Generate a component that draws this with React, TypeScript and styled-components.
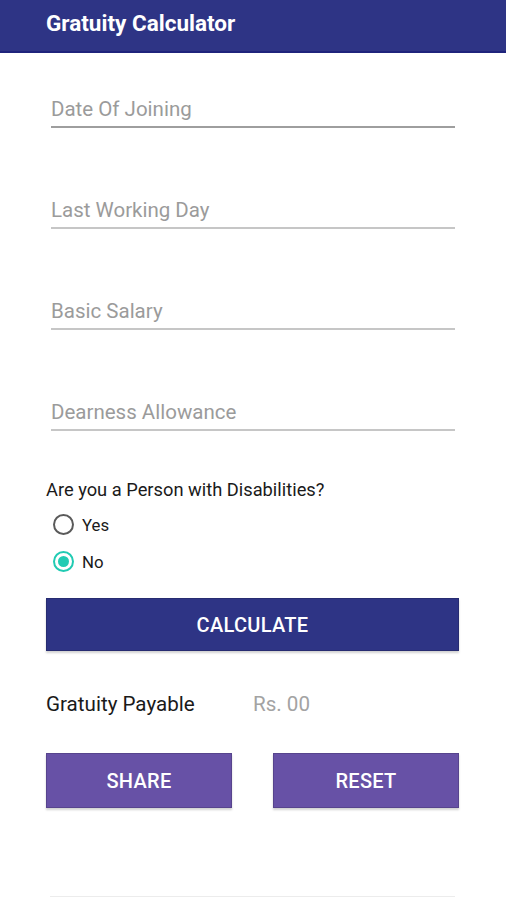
import React, { useState } from 'react';
import styled, { createGlobalStyle } from 'styled-components';

const GlobalStyle = createGlobalStyle`
  html, body {
    margin: 0;
    padding: 0;
    background: #ffffff;
    font-family: Roboto, "Noto Sans", "Liberation Sans", sans-serif;
  }
`;

const Page = styled.div`
  width: 506px;
  height: 900px;
  background: #ffffff;
  overflow: hidden;
  display: flex;
  flex-direction: column;
`;

const Toolbar = styled.header`
  height: 45px;
  background: #2e3485;
  border-bottom: 2px solid #1f247c;
  display: flex;
  align-items: center;
  padding-left: 46px;
  padding-bottom: 6px;
  box-sizing: content-box;
`;

const Title = styled.h1`
  margin: 0;
  color: #ffffff;
  font-size: 22.5px;
  font-weight: 700;
`;

const Content = styled.main`
  padding: 0 47px 0 46px;
  display: flex;
  flex-direction: column;
`;

const Fields = styled.div`
  display: flex;
  flex-direction: column;
  gap: 65px;
  padding: 39px 4px 0 5px;
`;

const Field = styled.label`
  display: flex;
  flex-direction: column;
`;

const FieldInput = styled.input<{ $active?: boolean }>`
  border: none;
  border-bottom: 2px solid ${(p) => (p.$active ? '#9e9e9e' : '#c6c6c6')};
  outline: none;
  padding: 0;
  height: 34px;
  font-family: inherit;
  font-size: 20.5px;
  color: #333;
  background: transparent;
  &::placeholder {
    color: #9b9b9b;
  }
`;

const Question = styled.p`
  margin: 48px 0 0;
  font-size: 18.3px;
  line-height: 22px;
  color: #1a1a1a;
`;

const RadioGroup = styled.div`
  display: flex;
  flex-direction: column;
  padding: 5px 0 0 7px;
`;

const RadioRow = styled.label`
  display: flex;
  align-items: center;
  gap: 8px;
  height: 37px;
  font-size: 16.8px;
  color: #1a1a1a;
  cursor: pointer;
`;

const RadioCircle = styled.span<{ $checked: boolean }>`
  width: 17px;
  height: 17px;
  border-radius: 50%;
  border: 2.5px solid ${(p) => (p.$checked ? '#21cbb3' : '#5a5a5a')};
  display: flex;
  align-items: center;
  justify-content: center;
  &::after {
    content: '';
    width: 11px;
    height: 11px;
    border-radius: 50%;
    background: ${(p) => (p.$checked ? '#21cbb3' : 'transparent')};
  }
`;

const Button = styled.button<{ $color: string }>`
  border: 1px solid rgba(0, 0, 0, 0.15);
  background: ${(p) => p.$color};
  color: #ffffff;
  font-family: inherit;
  font-size: 20px;
  font-weight: 500;
  letter-spacing: 0.3px;
  box-shadow: 0 2px 2px rgba(0, 0, 0, 0.18);
  cursor: pointer;
`;

const CalculateButton = styled(Button)`
  margin-top: 18px;
  height: 53px;
`;

const ResultRow = styled.div`
  display: flex;
  align-items: center;
  height: 30px;
  margin-top: 38px;
  font-size: 20.6px;
`;

const ResultLabel = styled.span`
  width: 207px;
  color: #1a1a1a;
`;

const ResultValue = styled.span`
  color: #a3a3a3;
`;

const ButtonRow = styled.div`
  display: grid;
  grid-template-columns: 186px 186px;
  justify-content: space-between;
  margin-top: 34px;
`;

const ActionButton = styled(Button)`
  height: 55px;
`;

const BottomRule = styled.div`
  margin: 88px 4px 0;
  height: 1px;
  background: #ececec;
`;

const fields = ['Date Of Joining', 'Last Working Day', 'Basic Salary', 'Dearness Allowance'];

const App: React.FC = () => {
  const [disabled, setDisabled] = useState<'yes' | 'no'>('no');

  return (
    <Page>
      <GlobalStyle />
      <Toolbar>
        <Title>Gratuity Calculator</Title>
      </Toolbar>
      <Content>
        <Fields>
          {fields.map((f, i) => (
            <Field key={f}>
              <FieldInput placeholder={f} $active={i === 0} />
            </Field>
          ))}
        </Fields>

        <Question>Are you a Person with Disabilities?</Question>
        <RadioGroup>
          <RadioRow onClick={() => setDisabled('yes')}>
            <RadioCircle $checked={disabled === 'yes'} />
            Yes
          </RadioRow>
          <RadioRow onClick={() => setDisabled('no')}>
            <RadioCircle $checked={disabled === 'no'} />
            No
          </RadioRow>
        </RadioGroup>

        <CalculateButton $color="#2e3485">CALCULATE</CalculateButton>

        <ResultRow>
          <ResultLabel>Gratuity Payable</ResultLabel>
          <ResultValue>Rs. 00</ResultValue>
        </ResultRow>

        <ButtonRow>
          <ActionButton $color="#6751a6">SHARE</ActionButton>
          <ActionButton $color="#6751a6">RESET</ActionButton>
        </ButtonRow>

        <BottomRule />
      </Content>
    </Page>
  );
};

export default App;
